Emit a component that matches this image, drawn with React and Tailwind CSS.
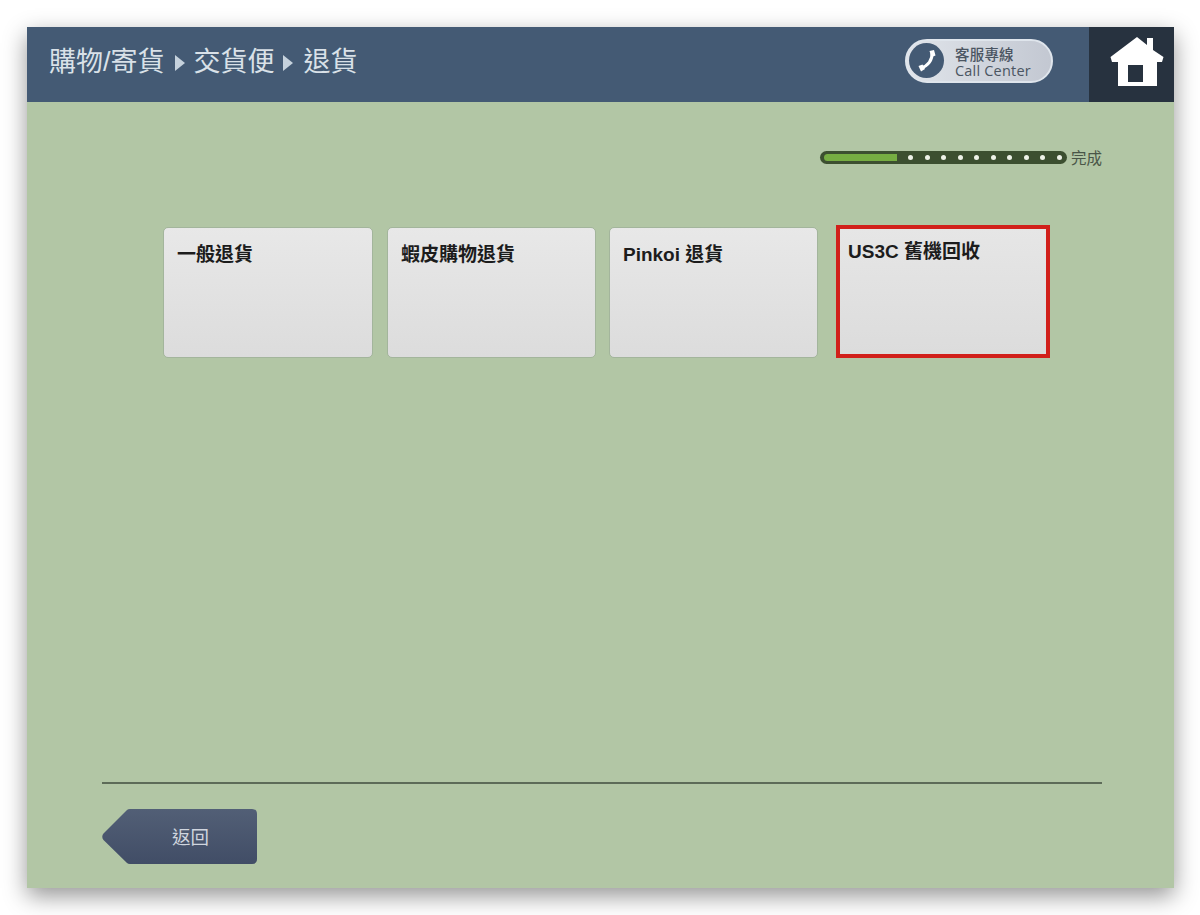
const cjk = "font-['Liberation_Sans','Noto_Sans_CJK_TC',sans-serif]";

function Card({ label, className }) {
  return (
    <div className={`h-[131px] rounded-[5px] border border-[#a3b59c] bg-gradient-to-b from-[#e8e8e8] to-[#dcdcdc] px-[13px] pt-[13px] text-[19px] font-bold leading-[28px] text-[#1c1c1c] ${className}`}>
      {label}
    </div>
  );
}

function Chevron({ className }) {
  return <span className={`h-0 w-0 border-y-[8px] border-l-[10px] border-y-transparent border-l-[#c6d2dd] ${className}`} />;
}

function HomeIcon() {
  return (
    <svg width="54" height="51" viewBox="0 0 54 51">
      <path fill="#fff" d="M27 0 L37 8 L37 1 L43 1 L43 13 L53.5 20 L52 25 L47 25 L47 49 L8 49 L8 25 L2 25 L0.5 20 Z" />
      <rect x="18" y="28" width="15" height="17" fill="#27323f" />
    </svg>
  );
}

function PhoneIcon() {
  return (
    <svg width="22" height="24" viewBox="0 0 22 24">
      <path d="M16 4 C16.5 11 12 17 5 19" fill="none" stroke="#fff" strokeWidth="3" />
      <path d="M13.5 2 L18 1 L19.5 6.5 L15.5 8 Z M2.5 17 L6.5 15.5 L9 20 L5 22.5 Z" fill="#fff" />
    </svg>
  );
}

function Progress() {
  const dots = Array.from({ length: 10 });
  return (
    <div className="flex items-center justify-end gap-[4px] pr-[72px]">
      <div className="flex h-[13px] w-[247px] items-center rounded-full bg-[#3c4f30] pl-[4px] pr-[5px]">
        <div className="h-[7px] w-[73px] rounded-l-full bg-[#76ad42]" />
        <div className="flex flex-1 items-center justify-between pl-[11px]">
          {dots.map((_, i) => (
            <span key={i} className="h-[5px] w-[5px] rounded-full bg-[#eef2e8]" />
          ))}
        </div>
      </div>
      <span className="mt-[2px] text-[15.5px] leading-[15px] text-[#4a5648]">完成</span>
    </div>
  );
}

function BackButton() {
  return (
    <div className="relative flex h-[55px] w-[155px] items-center justify-center pl-[22px] pt-[2px] text-[18.5px] text-[#d0d5de]">
      <svg className="absolute inset-0" width="155" height="55" viewBox="0 0 155 55">
        <defs>
          <linearGradient id="backGrad" x1="0" y1="0" x2="0" y2="1">
            <stop offset="0" stopColor="#525f76" />
            <stop offset="1" stopColor="#414d66" />
          </linearGradient>
        </defs>
        <path fill="url(#backGrad)" d="M1.5 24.5 L25 1 Q26 0 28 0 L150 0 Q155 0 155 5 L155 50 Q155 55 150 55 L28 55 Q26 55 25 54 L1.5 31 Q-1 27.5 1.5 24.5 Z" />
      </svg>
      <span className="relative">返回</span>
    </div>
  );
}

export default function App() {
  return (
    <div className={`h-[915px] w-[1200px] overflow-hidden bg-white pl-[27px] pt-[27px] ${cjk}`}>
      <div className="flex h-[861px] w-[1147px] flex-col bg-[#b2c6a5] shadow-[0_8px_22px_rgba(0,0,0,0.42)]">
        <header className="flex h-[75px] shrink-0 items-stretch bg-[#445a74]">
          <div className="flex flex-1 items-center pb-[4px] pl-[22px] text-[27px] leading-none text-[#d9e1e8]">
            <span>購物/寄貨</span>
            <Chevron className="ml-[10px] mr-[9px]" />
            <span>交貨便</span>
            <Chevron className="ml-[8px] mr-[11px]" />
            <span>退貨</span>
          </div>
          <div className="mr-[36px] flex items-center">
            <div className="flex h-[44px] w-[148px] -translate-y-[4px] items-center rounded-full border-2 border-[#dfe5ec] bg-gradient-to-r from-[#e0e4ea] to-[#c3c8d2] pl-[2px]">
              <div className="flex h-[35px] w-[35px] items-center justify-center rounded-full bg-[#445a74]">
                <PhoneIcon />
              </div>
              <div className="ml-[11px] mt-[4px] flex flex-col text-[14.5px] font-medium leading-[15px] text-[#4b5562]">
                <span className="tracking-[0.2px]">客服專線</span>
                <span className="font-['Open_Sans','Liberation_Sans',sans-serif] tracking-[0.2px]">Call Center</span>
              </div>
            </div>
          </div>
          <div className="flex w-[85px] items-center justify-center bg-[#27323f] pb-[5px] pl-[10px]">
            <HomeIcon />
          </div>
        </header>

        <main className="flex flex-1 flex-col">
          <div className="pt-[47px]">
            <Progress />
          </div>
          <div className="mt-[59px] flex items-end pl-[136px]">
            <Card label="一般退貨" className="w-[210px]" />
            <Card label="蝦皮購物退貨" className="ml-[14px] w-[209px]" />
            <Card label="Pinkoi 退貨" className="ml-[13px] w-[209px]" />
            <div className="ml-[18px] h-[133px] w-[214px] border-[4px] border-[#d1201a] bg-gradient-to-b from-[#e6e6e6] to-[#dcdcdc] pl-[8px] pt-[9px] text-[19px] font-bold leading-[28px] text-[#1c1c1c]">
              US3C 舊機回收
            </div>
          </div>
          <div className="mt-auto pb-[24px] pl-[75px] pr-[72px]">
            <div className="h-[2px] w-full bg-[#5d6b58]" />
            <div className="mt-[25px]">
              <BackButton />
            </div>
          </div>
        </main>
      </div>
    </div>
  );
}
